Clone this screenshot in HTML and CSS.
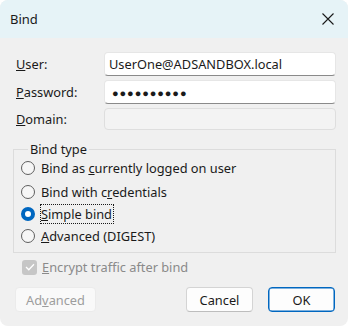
FILE: index.html
```html
<!DOCTYPE html>
<html lang="en">
<head>
    <meta charset="UTF-8">
    <title>Bind</title>
    <link rel="stylesheet" href="styles.css">
</head>
<body>
    <div class="window">
        <div class="titlebar">
            <span class="title">Bind</span>
            <svg class="close" width="12" height="12" viewBox="0 0 12 12">
                <path d="M0.5 0.5 L11.5 11.5 M11.5 0.5 L0.5 11.5" stroke="#1a1a1a" stroke-width="1.1" fill="none"/>
            </svg>
        </div>
        <div class="content">
            <div class="fields">
                <label><u>U</u>ser:</label>
                <div class="textbox">UserOne@ADSANDBOX.local</div>
                <label><u>P</u>assword:</label>
                <div class="textbox password">&#9679;&#9679;&#9679;&#9679;&#9679;&#9679;&#9679;&#9679;&#9679;&#9679;</div>
                <label class="muted"><u>D</u>omain:</label>
                <div class="textbox disabled"></div>
            </div>

            <fieldset class="group">
                <legend>Bind type</legend>
                <div class="radio first"><span class="dot"></span><span>Bind as <u>c</u>urrently logged on user</span></div>
                <div class="radio"><span class="dot"></span><span>Bind with c<u>r</u>edentials</span></div>
                <div class="radio"><span class="dot checked"></span><span class="focus"><u>S</u>imple bind</span></div>
                <div class="radio"><span class="dot"></span><span><u>A</u>dvanced (DIGEST)</span></div>
            </fieldset>

            <div class="check">
                <span class="box">
                    <svg width="10" height="8" viewBox="0 0 10 8">
                        <path d="M1 4 L3.8 6.8 L9 1.2" stroke="#ffffff" stroke-width="1.3" fill="none"/>
                    </svg>
                </span>
                <span><u>E</u>ncrypt traffic after bind</span>
            </div>

            <div class="buttons">
                <div class="btn off">Ad<u>v</u>anced</div>
                <div class="spacer"></div>
                <div class="btn">Cancel</div>
                <div class="btn default">OK</div>
            </div>
        </div>
    </div>
</body>
</html>
```

FILE: styles.css
```css
body {
    margin: 0;
    background: #ffffff;
    font-family: "Noto Sans", "Open Sans", sans-serif;
    font-size: 12.8px;
    color: #1a1a1a;
}

.window {
    width: 348px;
    height: 326px;
    background: #f0f0f0;
    border-radius: 8px;
    overflow: hidden;
}

.titlebar {
    height: 38px;
    background: #e6f3f7;
    display: flex;
    align-items: center;
    justify-content: space-between;
    padding: 0 14px 0 10px;
}

.title {
    font-size: 13px;
}

.content {
    padding: 14px 12px 0 13px;
}

.fields {
    display: grid;
    grid-template-columns: 88px 1fr;
    grid-template-rows: 24px 24px 22px;
    row-gap: 4px;
    align-items: center;
    padding-left: 3px;
}

label {
    line-height: 16px;
}

.textbox {
    height: 100%;
    box-sizing: border-box;
    background: #ffffff;
    border: 1px solid #e6e6e6;
    border-bottom: 1px solid #8a8a8a;
    border-radius: 4px;
    padding: 0 4px;
    display: flex;
    align-items: center;
}

.textbox.password {
    font-size: 11px;
    letter-spacing: 0.9px;
    padding-left: 7px;
}

.textbox.disabled {
    background: #f3f3f3;
    border: 1px solid #dedede;
}

.group {
    margin: 11px 0 0 0;
    padding: 0 0 6px 7px;
    border: 1px solid #dcdcdc;
    border-radius: 0;
}

.group legend {
    padding: 0 2px;
    margin-left: 7px;
    line-height: 16px;
}

.radio {
    display: flex;
    align-items: center;
    gap: 6px;
    height: 21px;
    margin-top: 1px;
}

.radio.first {
    margin-top: 0;
    margin-bottom: 3px;
}

.dot {
    width: 14px;
    height: 14px;
    box-sizing: border-box;
    border: 1px solid #5f5f5f;
    border-radius: 50%;
    background: #f6f6f6;
}

.dot.checked {
    border: 4px solid #0067c0;
    background: #ffffff;
}

.focus {
    outline: 1px dotted #1a1a1a;
    outline-offset: 0;
    padding-right: 1px;
}

.check {
    display: flex;
    align-items: center;
    gap: 5px;
    margin: 5px 0 0 9px;
    color: #8a8a8a;
}

.box {
    width: 15px;
    height: 15px;
    border-radius: 3px;
    background: #c6c6c6;
    display: flex;
    align-items: center;
    justify-content: center;
}

.buttons {
    display: flex;
    gap: 15px;
    margin-top: 11px;
    padding: 0 1px 0 2px;
}

.spacer {
    flex: 1;
}

.btn {
    width: 67px;
    height: 25px;
    box-sizing: border-box;
    background: #fdfdfd;
    border: 1px solid #d4d4d4;
    border-bottom-color: #bdbdbd;
    border-radius: 4px;
    display: flex;
    align-items: center;
    justify-content: center;
}

.btn.off {
    width: 81px;
    background: #f9f9f9;
    border: 1px solid #ebebeb;
    color: #9d9d9d;
}

.btn.default {
    border: 1px solid #0067c0;
    box-shadow: inset 0 0 0 0.5px #0067c0;
}
```
